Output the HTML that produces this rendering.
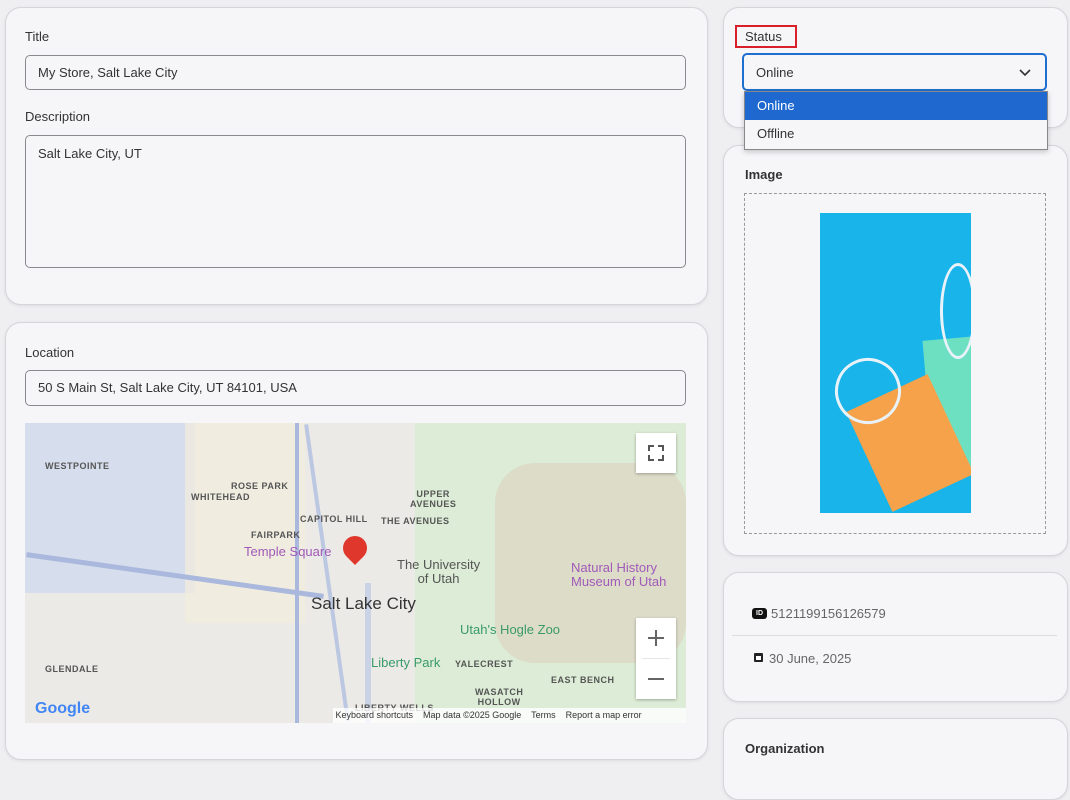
<!DOCTYPE html>
<html><head><style>
body{margin:0;width:1070px;height:770px;background:#efeef1;font-family:"Liberation Sans",sans-serif;position:relative;overflow:hidden;color:#333}
.card{position:absolute;background:#f6f5f8;border:1px solid #d6d5d9;border-radius:16px;box-shadow:0 1px 3px rgba(0,0,0,.08)}
.lbl{position:absolute;font-size:13px;color:#333}
.inp{position:absolute;border:1px solid #8a8a8e;border-radius:5px;background:#f6f5f8;font-size:13px;color:#333;box-sizing:border-box;padding-left:12px}
.m{position:absolute;font-size:9px;color:#555;font-weight:bold;letter-spacing:.5px}
</style></head><body>
<div class="card" style="left:5px;top:7px;width:701px;height:296px"></div>
<div class="lbl" style="left:25px;top:29px">Title</div>
<div class="inp" style="left:25px;top:55px;width:661px;height:35px;line-height:33px">My Store, Salt Lake City</div>
<div class="lbl" style="left:25px;top:109px">Description</div>
<div class="inp" style="left:25px;top:135px;width:661px;height:133px;padding-top:10px">Salt Lake City, UT</div>

<div class="card" style="left:5px;top:322px;width:701px;height:436px"></div>
<div class="lbl" style="left:25px;top:345px">Location</div>
<div class="inp" style="left:25px;top:370px;width:661px;height:36px;line-height:34px">50 S Main St, Salt Lake City, UT 84101, USA</div>
<div style="position:absolute;left:25px;top:423px;width:661px;height:300px;background:#eceae6;overflow:hidden">
 <div style="position:absolute;left:0;top:0;width:170px;height:170px;background:#d6ddec"></div>
 <div style="position:absolute;left:390px;top:0;width:271px;height:300px;background:#dcecd6"></div>
 <div style="position:absolute;left:470px;top:40px;width:191px;height:200px;background:#ddd2bf;opacity:.6;border-radius:40px"></div>
 <div style="position:absolute;left:160px;top:0;width:120px;height:200px;background:#f2ecdc;opacity:.7"></div>
 <div style="position:absolute;left:270px;top:0;width:4px;height:300px;background:#a9b8dc"></div>
 <div style="position:absolute;left:0;top:150px;width:300px;height:5px;background:#a9b8dc;transform:rotate(8deg)"></div>
 <div style="position:absolute;left:300px;top:0;width:4px;height:300px;background:#bcc7e2;transform:rotate(-8deg)"></div>
 <div style="position:absolute;left:340px;top:160px;width:6px;height:140px;background:#cad2e5"></div>
 <div class="m" style="left:20px;top:38px">WESTPOINTE</div>
 <div class="m" style="left:166px;top:69px">WHITEHEAD</div>
 <div class="m" style="left:206px;top:58px">ROSE PARK</div>
 <div class="m" style="left:226px;top:107px">FAIRPARK</div>
 <div class="m" style="left:275px;top:91px">CAPITOL HILL</div>
 <div class="m" style="left:385px;top:66px;text-align:center">UPPER<br>AVENUES</div>
 <div class="m" style="left:356px;top:93px">THE AVENUES</div>
 <div style="position:absolute;left:219px;top:121px;font-size:13px;color:#a05ab8">Temple Square</div>
 <div style="position:absolute;left:318px;top:113px;width:24px;height:24px;background:#e0372c;border-radius:50% 50% 50% 0;transform:rotate(-45deg)"></div>
 <div style="position:absolute;left:372px;top:135px;font-size:13px;color:#555;text-align:center;line-height:14px">The University<br>of Utah</div>
 <div style="position:absolute;left:546px;top:138px;font-size:13px;color:#a05ab8;line-height:14px">Natural History<br>Museum of Utah</div>
 <div style="position:absolute;left:286px;top:171px;font-size:17px;color:#333">Salt Lake City</div>
 <div style="position:absolute;left:435px;top:199px;font-size:13px;color:#3a9a6a">Utah's Hogle Zoo</div>
 <div style="position:absolute;left:346px;top:232px;font-size:13px;color:#3a9a6a">Liberty Park</div>
 <div class="m" style="left:430px;top:236px">YALECREST</div>
 <div class="m" style="left:20px;top:241px">GLENDALE</div>
 <div class="m" style="left:526px;top:252px">EAST BENCH</div>
 <div class="m" style="left:450px;top:264px;text-align:center">WASATCH<br>HOLLOW</div>
 <div class="m" style="left:330px;top:280px">LIBERTY WELLS</div>
 <div style="position:absolute;left:611px;top:10px;width:40px;height:40px;background:#fff;box-shadow:0 1px 3px rgba(0,0,0,.3)"><svg width="40" height="40"><path d="M13 18v-5h5M22 13h5v5M27 22v5h-5M18 27h-5v-5" fill="none" stroke="#555" stroke-width="2"/></svg></div>
 <div style="position:absolute;left:611px;top:195px;width:40px;height:81px;background:#fff;box-shadow:0 1px 3px rgba(0,0,0,.3)"><svg width="40" height="81"><path d="M12 20h16M20 12v16M12 61h16" stroke="#666" stroke-width="2"/><path d="M6 40.5h28" stroke="#e6e6e6"/></svg></div>
 <div style="position:absolute;left:10px;top:277px;font-size:16px;font-weight:bold;color:#4285f4">Google</div>
 <div style="position:absolute;left:308px;top:285px;height:15px;width:353px;background:rgba(255,255,255,.8);font-size:9px;color:#333;line-height:15px">&nbsp;Keyboard shortcuts &nbsp;&nbsp; Map data ©2025 Google &nbsp;&nbsp; Terms &nbsp;&nbsp; Report a map error</div>
</div>

<div class="card" style="left:723px;top:7px;width:343px;height:119px"></div>
<div style="position:absolute;left:735px;top:25px;width:62px;height:23px;border:2px solid #d9202a;box-sizing:border-box"></div>
<div class="lbl" style="left:745px;top:29px">Status</div>
<div class="inp" style="left:742px;top:53px;width:305px;height:38px;line-height:36px;border:2px solid #1e6fcf">Online</div>
<svg style="position:absolute;left:1019px;top:69px" width="12" height="8"><path d="M1 1l5 5 5-5" fill="none" stroke="#333" stroke-width="1.6"/></svg>

<div class="card" style="left:723px;top:145px;width:343px;height:409px"></div>
<div class="lbl" style="left:745px;top:167px;font-weight:bold">Image</div>
<div style="position:absolute;left:744px;top:193px;width:302px;height:341px;border:1px dashed #999;box-sizing:border-box"></div>
<div style="position:absolute;left:820px;top:213px;width:151px;height:300px;background:#18b4ea;overflow:hidden">
 <div style="position:absolute;left:108px;top:125px;width:60px;height:130px;background:#6ee0c2;transform:rotate(-5deg)"></div>
 <div style="position:absolute;left:45px;top:175px;width:90px;height:110px;background:#f5a24a;transform:rotate(-25deg)"></div>
 <div style="position:absolute;left:15px;top:145px;width:60px;height:60px;border:3px solid #e8f2f8;border-radius:50%;transform:rotate(-25deg)"></div>
 <div style="position:absolute;left:120px;top:50px;width:30px;height:90px;border:3px solid #e8f2f8;border-radius:50%"></div>
</div>

<div style="position:absolute;left:744px;top:91px;width:302px;height:57px;background:#f6f5f8;border:1px solid #888;box-shadow:0 2px 5px rgba(0,0,0,.2);font-size:13px;z-index:5">
 <div style="height:28px;background:#1f68d0;color:#fff;line-height:28px;padding-left:12px">Online</div>
 <div style="height:28px;line-height:28px;padding-left:12px">Offline</div>
</div>

<div class="card" style="left:723px;top:572px;width:343px;height:128px"></div>
<div style="position:absolute;left:752px;top:608px;width:15px;height:11px;background:#111;border-radius:3px;color:#fff;font-size:7px;font-weight:bold;text-align:center;line-height:11px">ID</div>
<div style="position:absolute;left:771px;top:606px;font-size:13px;color:#666">5121199156126579</div>
<div style="position:absolute;left:732px;top:635px;width:325px;height:1px;background:#ddd"></div>
<div style="position:absolute;left:754px;top:653px;width:9px;height:9px;background:#222;border-radius:1px"><div style="position:absolute;left:2px;top:3px;width:5px;height:4px;background:#fff"></div></div>
<div style="position:absolute;left:769px;top:651px;font-size:13px;color:#666">30 June, 2025</div>

<div class="card" style="left:723px;top:718px;width:343px;height:80px"></div>
<div class="lbl" style="left:745px;top:741px;font-weight:bold">Organization</div>
</body></html>
